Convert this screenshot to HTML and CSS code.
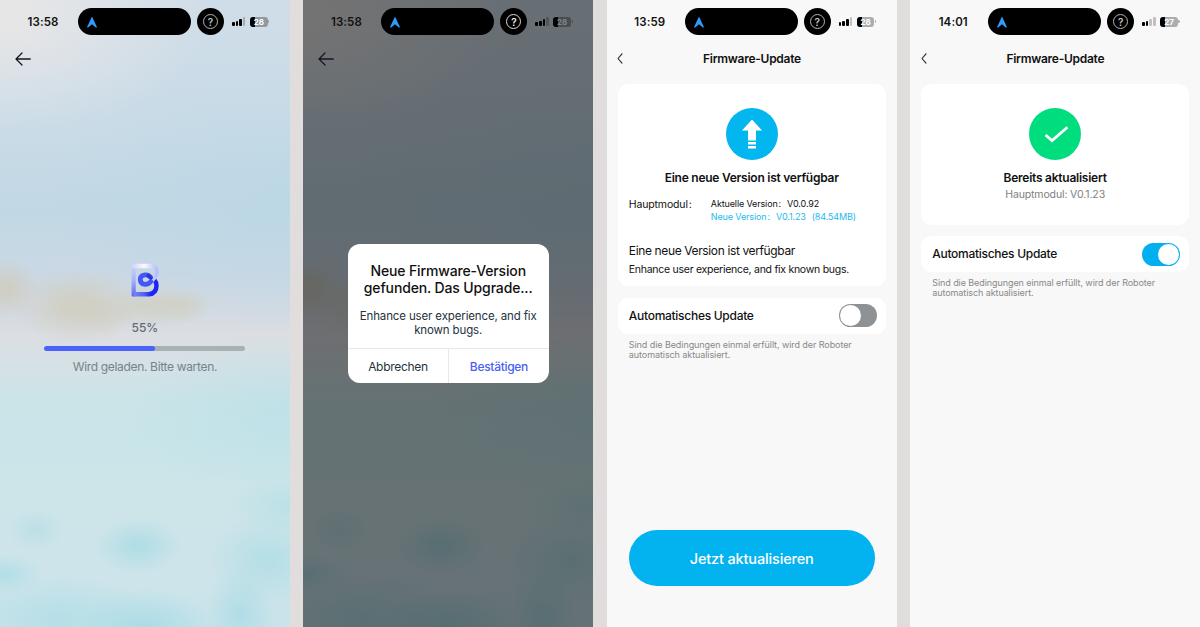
FILE: index.html
```html
<!DOCTYPE html>
<html lang="de">
<head>
  <meta charset="UTF-8">
  <title>Firmware-Update</title>
  <link rel="stylesheet" href="styles.css">
</head>
<body>
  <!-- shared shapes -->
  <svg class="defs" width="0" height="0">
    <symbol id="nav" viewBox="0 0 10 12">
      <path d="M5 .5 9.9 11 Q9.6 11.8 8.8 11.4 L5 8.3 1.2 11.4 Q.4 11.8 .1 11Z" fill="#2f9bff"/>
    </symbol>
    <symbol id="back" viewBox="0 0 16 14">
      <path d="M15.2 7H1M7 1 1 7l6 6" fill="none" stroke="#111820" stroke-width="1.3" stroke-linecap="round" stroke-linejoin="round"/>
    </symbol>
    <symbol id="chevron" viewBox="0 0 6 11">
      <path d="M5 .8 1 5.5 5 10.2" fill="none" stroke="#222" stroke-width="1.1" stroke-linecap="round" stroke-linejoin="round"/>
    </symbol>
  </svg>

  <main class="screens">
    <!-- Laden -->
    <section class="phone beach">
      <header class="status">
        <span class="time">13:58</span>
        <span class="island"><svg width="10" height="12"><use href="#nav"/></svg></span>
        <span class="help"><span class="ring">?</span></span>
        <span class="signal"><i></i><i></i><i></i><i class="off"></i></span>
        <span class="battery">28</span>
      </header>
      <nav class="back"><svg width="16" height="14"><use href="#back"/></svg></nav>
      <div class="loading">
        <svg class="logo" width="28" height="34" viewBox="0 0 28 34">
          <defs>
            <linearGradient id="stem" x1="0" y1="0" x2="0" y2="1">
              <stop offset="0" stop-color="#d3d6fb"/>
              <stop offset=".5" stop-color="#a9b2fa"/>
              <stop offset="1" stop-color="#5a66f7"/>
            </linearGradient>
            <linearGradient id="bowl" x1="0" y1="0" x2="1" y2="0">
              <stop offset="0" stop-color="#7782fa"/>
              <stop offset=".45" stop-color="#5560f5"/>
              <stop offset=".75" stop-color="#1c25f5"/>
            </linearGradient>
            <linearGradient id="top" x1="0" y1="0" x2="1" y2="0">
              <stop offset="0" stop-color="#d3d7fb"/>
              <stop offset=".45" stop-color="#fbfbff"/>
              <stop offset="1" stop-color="#b9bffb"/>
            </linearGradient>
          </defs>
          <rect x=".6" y=".6" width="4.2" height="32.8" rx="1.2" fill="url(#stem)"/>
          <path d="M3 31.2H18Q25.4 30.5 25.5 22.6 25.4 19 23.3 16.7" fill="none" stroke="url(#bowl)" stroke-width="4.4"/>
          <path d="M2.6 3H18Q25.6 3.4 25.6 9.7 25.3 14.2 19.5 18" fill="none" stroke="url(#top)" stroke-width="4.6" stroke-linecap="round"/>
          <path d="M19.8 14.4Q17.6 11.7 14 11.9 9.3 12.3 9.2 16.7 9.6 21.2 14.2 21.4 17.4 21.3 19.8 18.6" fill="none" stroke="#4656f8" stroke-width="4.7" stroke-linecap="round"/>
          <path d="M17.2 12.6 19.6 14.6" stroke="#2b38d8" stroke-width="3.8" stroke-linecap="round"/>
        </svg>
        <p class="percent">55%</p>
        <div class="bar"><div class="bar-fill" style="width: 55%"></div></div>
        <p class="wait">Wird geladen. Bitte warten.</p>
      </div>
    </section>

    <!-- Dialog -->
    <section class="phone beach dimmed">
      <header class="status">
        <span class="time">13:58</span>
        <span class="island"><svg width="10" height="12"><use href="#nav"/></svg></span>
        <span class="help"><span class="ring">?</span></span>
        <span class="signal"><i></i><i></i><i></i><i class="off"></i></span>
        <span class="battery">28</span>
      </header>
      <nav class="back"><svg width="16" height="14"><use href="#back"/></svg></nav>
      <div class="dialog">
        <h2 class="dialog-title">Neue Firmware-Version<br>gefunden. Das Upgrade...</h2>
        <p class="dialog-text">Enhance user experience, and fix<br>known bugs.</p>
        <div class="dialog-buttons">
          <button class="cancel">Abbrechen</button>
          <button class="confirm">Bestätigen</button>
        </div>
      </div>
    </section>

    <!-- Neue Version -->
    <section class="phone">
      <header class="status">
        <span class="time">13:59</span>
        <span class="island"><svg width="10" height="12"><use href="#nav"/></svg></span>
        <span class="help"><span class="ring">?</span></span>
        <span class="signal"><i></i><i></i><i></i><i class="off"></i></span>
        <span class="battery">28</span>
      </header>
      <nav class="titlebar">
        <svg width="6" height="11"><use href="#chevron"/></svg>
        <h1>Firmware-Update</h1>
      </nav>
      <div class="card card-new">
        <svg class="badge" width="52" height="52" viewBox="0 0 52 52">
          <circle cx="26" cy="26" r="26" fill="#03b6ef"/>
          <path d="M26 11.5 36 22.4H30V32.4H22V22.4H16Z" fill="#fff"/>
          <path d="M22 34h8v2.4h-8zM22 38h8v2.4h-8z" fill="#fff"/>
        </svg>
        <h2 class="card-title">Eine neue Version ist verfügbar</h2>
        <div class="module">
          <span class="module-name">Hauptmodul<span class="colon">:</span></span>
          <div class="versions">
            <p>Aktuelle Version<span class="colon">:</span><span class="v">V0.0.92</span></p>
            <p class="new">Neue Version<span class="colon">:</span><span class="v">V0.1.23</span><span class="size">(84.54MB)</span></p>
          </div>
        </div>
        <h3 class="notes-title">Eine neue Version ist verfügbar</h3>
        <p class="notes">Enhance user experience, and fix known bugs.</p>
      </div>
      <div class="card setting">
        <span class="setting-name">Automatisches Update</span>
        <span class="toggle"></span>
      </div>
      <p class="hint">Sind die Bedingungen einmal erfüllt, wird der Roboter<br>automatisch aktualisiert.</p>
      <button class="update">Jetzt aktualisieren</button>
    </section>

    <!-- Bereits aktualisiert -->
    <section class="phone">
      <header class="status">
        <span class="time">14:01</span>
        <span class="island"><svg width="10" height="12"><use href="#nav"/></svg></span>
        <span class="help"><span class="ring">?</span></span>
        <span class="signal"><i></i><i></i><i class="off"></i><i class="off"></i></span>
        <span class="battery">27</span>
      </header>
      <nav class="titlebar">
        <svg width="6" height="11"><use href="#chevron"/></svg>
        <h1>Firmware-Update</h1>
      </nav>
      <div class="card card-done">
        <svg class="badge" width="52" height="52" viewBox="0 0 52 52">
          <circle cx="26" cy="26" r="26" fill="#00dd7f"/>
          <path d="M16.6 27 23 32.6 38.4 19.2" fill="none" stroke="#fff" stroke-width="2.8"/>
        </svg>
        <h2 class="card-title">Bereits aktualisiert</h2>
        <p class="module-line">Hauptmodul: V0.1.23</p>
      </div>
      <div class="card setting">
        <span class="setting-name">Automatisches Update</span>
        <span class="toggle on"></span>
      </div>
      <p class="hint">Sind die Bedingungen einmal erfüllt, wird der Roboter<br>automatisch aktualisiert.</p>
    </section>
  </main>
</body>
</html>
```
FILE: styles.css
```css
* {
  box-sizing: border-box;
}

body {
  margin: 0;
  background: #e1dddc;
  color: #111;
  font-family: Inter, "Liberation Sans", sans-serif;
}

h1, h2, h3, p {
  margin: 0;
}

button {
  padding: 0;
  border: none;
  background: none;
  font-family: inherit;
}

.defs {
  position: absolute;
}

.screens {
  display: grid;
  grid-template-columns: repeat(4, 1fr);
  column-gap: 13.67px;
  height: 627px;
}

.phone {
  display: flex;
  flex-direction: column;
  height: 627px;
  overflow: hidden;
  background: #f8f8f8;
}

/* blurred beach: sky, dunes, water */
.beach {
  background:
    radial-gradient(34px 30px at 6px 289px, rgba(207, 203, 188, .75) 20%, rgba(207, 203, 188, 0) 100%),
    radial-gradient(66px 38px at 78px 306px, rgba(208, 206, 192, .85) 20%, rgba(208, 206, 192, 0) 100%),
    radial-gradient(30px 20px at 104px 314px, rgba(208, 206, 192, .5), rgba(208, 206, 192, 0) 100%),
    radial-gradient(56px 22px at 155px 306px, rgba(208, 208, 196, .8) 20%, rgba(208, 208, 196, 0) 100%),
    radial-gradient(28px 18px at 184px 306px, rgba(208, 208, 196, .6) 10%, rgba(208, 208, 196, 0) 100%),
    radial-gradient(44px 28px at 138px 546px, rgba(168, 219, 228, .75) 10%, rgba(168, 219, 228, 0) 100%),
    radial-gradient(28px 22px at 36px 530px, rgba(176, 219, 228, .5) 10%, rgba(176, 219, 228, 0) 100%),
    radial-gradient(42px 20px at 2px 574px, rgba(166, 220, 230, .65) 10%, rgba(166, 220, 230, 0) 100%),
    radial-gradient(90px 44px at 60px 618px, rgba(166, 219, 229, .5) 10%, rgba(166, 219, 229, 0) 100%),
    radial-gradient(70px 38px at 145px 627px, rgba(160, 217, 228, .65) 10%, rgba(160, 217, 228, 0) 100%),
    radial-gradient(60px 46px at 268px 560px, rgba(168, 219, 228, .6) 10%, rgba(168, 219, 228, 0) 100%),
    radial-gradient(34px 46px at 240px 614px, rgba(164, 218, 228, .6) 10%, rgba(164, 218, 228, 0) 100%),
    radial-gradient(60px 28px at 288px 506px, rgba(172, 221, 228, .5) 10%, rgba(172, 221, 228, 0) 100%),
    radial-gradient(170px 80px at 290px 415px, rgba(180, 222, 230, .5), rgba(180, 222, 230, 0) 100%),
    radial-gradient(210px 120px at 0 15px, #e7e6e7 10%, rgba(231, 230, 231, 0) 100%),
    radial-gradient(250px 130px at 290px 200px, rgba(186, 215, 229, .7), rgba(186, 215, 229, 0) 100%),
    linear-gradient(#cfdde8 0, #c9dbe7 130px, #c1d8e4 210px, #cad8e4 275px, #d3dae2 310px, #dbdee3 335px, #d5e1e5 365px, #cbe4e8 400px, #c9e5e9 440px, #cde5e9 500px, #cde4ea 580px, #c8e3ea 627px);
}

.dimmed {
  position: relative;
}

.dimmed::before {
  content: "";
  position: absolute;
  inset: 0;
  background: rgba(0, 0, 0, .5);
}

.dimmed .status,
.dimmed .back,
.dimmed .dialog {
  z-index: 1;
}

/* status bar */
.status {
  flex: none;
  display: flex;
  align-items: center;
  height: 43px;
  padding-left: 23px;
}

.time {
  width: 40px;
  margin-right: 15px;
  font-size: 11.5px;
  font-weight: 600;
  letter-spacing: 0.1px;
  text-align: center;
}

.island {
  display: flex;
  align-items: center;
  width: 113px;
  height: 27px;
  padding-left: 9px;
  border-radius: 14px;
  background: #000;
}

.help {
  display: grid;
  place-items: center;
  width: 27px;
  height: 27px;
  margin-left: 6px;
  border-radius: 50%;
  background: #000;
}

.ring {
  display: grid;
  place-items: center;
  width: 15px;
  height: 15px;
  border: 1.3px solid #b5b5b5;
  border-radius: 50%;
  color: #c4c4c4;
  font-size: 10px;
  font-weight: 600;
  line-height: 1;
}

.dimmed .ring {
  border-color: #ddd;
  color: #eee;
}

.signal {
  display: flex;
  align-items: flex-end;
  gap: 1px;
  width: 14px;
  height: 9px;
  margin-left: 8px;
}

.signal i {
  width: 2.6px;
  height: 4px;
  border-radius: 1px;
  background: #000;
}

.signal i:nth-child(2) {
  height: 5.5px;
}

.signal i:nth-child(3) {
  height: 7.2px;
}

.signal i:nth-child(4) {
  height: 9px;
}

.signal i.off {
  background: rgba(0, 0, 0, .22);
}

.battery {
  position: relative;
  width: 17.5px;
  height: 10px;
  margin-left: 4px;
  border-radius: 3px;
  background: linear-gradient(90deg, #000 5px, rgba(0, 0, 0, .3) 5px);
  color: #fff;
  font-size: 8px;
  font-weight: 700;
  line-height: 10px;
  text-align: center;
}

.battery::after {
  content: "";
  position: absolute;
  left: 18.2px;
  top: 3.3px;
  width: 1.3px;
  height: 3.5px;
  border-radius: 0 2px 2px 0;
  background: rgba(0, 0, 0, .3);
}

.dimmed .battery {
  color: #808486;
}

.back {
  display: flex;
  height: 33px;
  padding: 9px 0 0 15px;
}

/* loading */
.loading {
  display: flex;
  flex-direction: column;
  align-items: center;
  padding-top: 187px;
}

.percent {
  margin-top: 22px;
  color: #626d75;
  font-size: 12px;
  font-weight: 500;
  line-height: 17px;
}

.bar {
  width: 201px;
  height: 4.5px;
  margin-top: 10px;
  border-radius: 3px;
  background: #a9b1b6;
  overflow: hidden;
}

.bar-fill {
  height: 100%;
  border-radius: 3px;
  background: #4a62fb;
}

.wait {
  margin-top: 7.5px;
  color: #76838b;
  font-size: 12px;
  letter-spacing: -0.33px;
  line-height: 17px;
}

/* dialog */
.dialog {
  display: flex;
  flex-direction: column;
  width: 201px;
  height: 139px;
  margin: 168px 0 0 44.3px;
  border-radius: 12px;
  background: #fff;
  text-align: center;
}

.dialog-title {
  padding-top: 17.5px;
  font-size: 14px;
  font-weight: 500;
  letter-spacing: -0.14px;
  line-height: 17.5px;
  white-space: nowrap;
}

.dialog-text {
  flex: 1;
  padding-top: 12.5px;
  color: #26323c;
  font-size: 11.5px;
  letter-spacing: -0.14px;
  line-height: 14px;
  white-space: nowrap;
}

.dialog-buttons {
  display: grid;
  grid-template-columns: 1fr 1fr;
  height: 35px;
  border-top: 1px solid #e8e8e8;
}

.dialog-buttons button {
  color: #26323c;
  font-size: 12px;
  letter-spacing: -0.3px;
}

.dialog-buttons .confirm {
  border-left: 1px solid #e8e8e8;
  color: #4a5ff5;
  font-weight: 500;
}

/* firmware pages */
.titlebar {
  flex: none;
  display: flex;
  align-items: center;
  height: 41px;
  padding: 0 11px 11px 10.5px;
}

.titlebar h1 {
  flex: 1;
  margin-right: 5px;
  font-size: 12px;
  font-weight: 600;
  letter-spacing: -0.27px;
  text-align: center;
}

.card {
  flex: none;
  margin: 0 11px;
  border-radius: 11px;
  background: #fff;
}

.card-new,
.card-done {
  display: flex;
  flex-direction: column;
  align-items: center;
  padding: 24px 11px 0;
}

.card-new {
  height: 202px;
}

.card-done {
  height: 140.5px;
}

.badge {
  flex: none;
}

.card-title {
  margin-top: 9px;
  font-size: 12px;
  font-weight: 600;
  letter-spacing: -0.25px;
  line-height: 17px;
  white-space: nowrap;
}

.module-line {
  color: #808080;
  font-size: 10.5px;
  letter-spacing: -0.13px;
  line-height: 17px;
}

.module {
  display: flex;
  align-self: stretch;
  margin-top: 10.5px;
}

.module-name {
  width: 82px;
  font-size: 10.5px;
  letter-spacing: -0.15px;
  line-height: 15px;
}

.colon {
  margin-left: 1px;
}

.versions {
  font-size: 9px;
  letter-spacing: -0.13px;
  line-height: 13.5px;
  white-space: nowrap;
}

.versions .v {
  margin-left: 6px;
}

.versions .size {
  margin-left: 6px;
}

.versions .new {
  color: #23b9ee;
}

.notes-title {
  align-self: flex-start;
  margin-top: 18.5px;
  font-size: 12px;
  font-weight: 400;
  letter-spacing: -0.37px;
  line-height: 17px;
}

.notes {
  align-self: flex-start;
  margin-top: 3px;
  font-size: 10.5px;
  letter-spacing: -0.27px;
  line-height: 15px;
  white-space: nowrap;
}

.setting {
  display: flex;
  align-items: center;
  justify-content: space-between;
  height: 36px;
  margin-top: 11.5px;
  padding: 0 9px 0 11px;
}

.setting-name {
  padding-bottom: 1px;
  font-size: 12px;
  font-weight: 500;
  letter-spacing: -0.28px;
}

.toggle {
  display: flex;
  width: 38px;
  height: 23px;
  padding: 1px;
  border-radius: 12px;
  background: #8e9295;
}

.toggle::before {
  content: "";
  width: 21px;
  height: 21px;
  border-radius: 50%;
  background: #fff;
}

.toggle.on {
  justify-content: flex-end;
  background: #03b0ef;
}

.hint {
  margin: 6px 0 0 22px;
  color: #888;
  font-size: 9px;
  letter-spacing: -0.08px;
  line-height: 10.4px;
  white-space: nowrap;
}

.update {
  height: 56px;
  margin: auto 22px 41px;
  border-radius: 28px;
  background: #03b3ef;
  color: #fff;
  font-size: 14.5px;
  font-weight: 500;
  letter-spacing: -0.15px;
}
```
